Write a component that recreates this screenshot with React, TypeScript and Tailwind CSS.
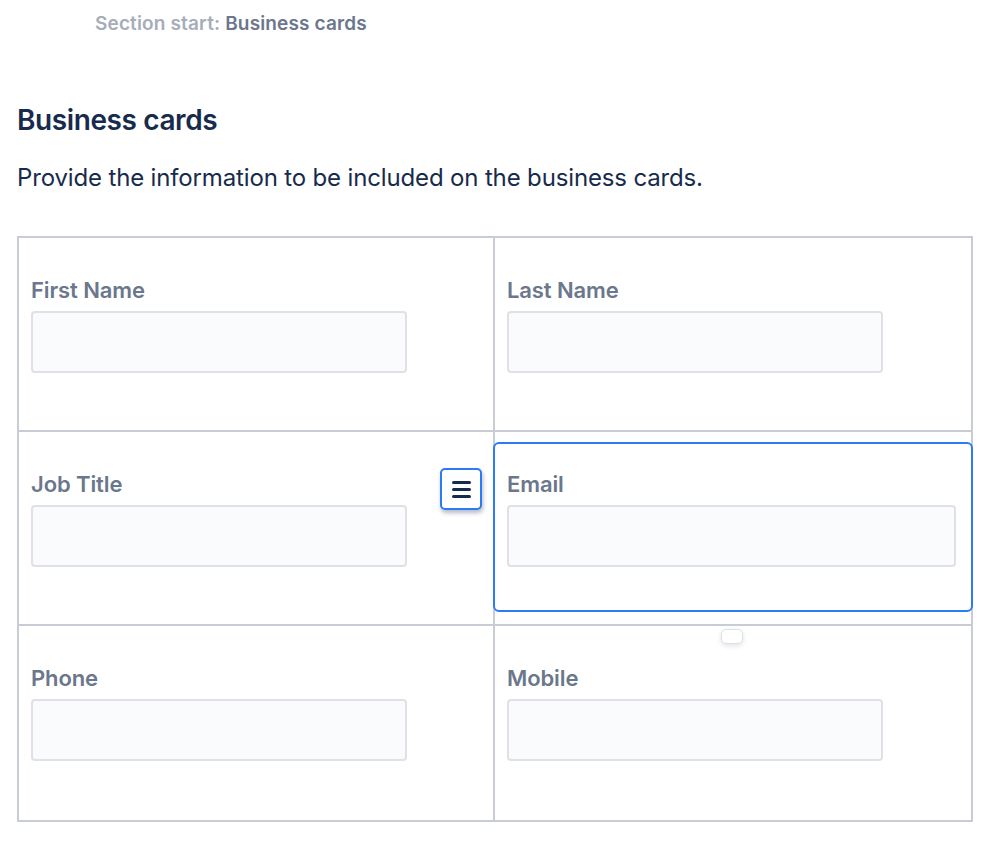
import { Fragment } from 'react';

const font = { fontFamily: 'Inter, "Noto Sans", sans-serif' };

interface Field {
  label: string;
  selected?: boolean;
}

const fields: Field[] = [
  { label: 'First Name' },
  { label: 'Last Name' },
  { label: 'Job Title' },
  { label: 'Email', selected: true },
  { label: 'Phone' },
  { label: 'Mobile' },
];

function Cell({ field, index }: { field: Field; index: number }) {
  const right = index % 2 === 1;
  const lastRow = index >= 4;
  return (
    <div
      className={`relative h-[194px] pl-[12px] pt-[37px] ${right ? '' : 'border-r-2 border-[#c8cdd5]'} ${lastRow ? '' : 'border-b-2 border-[#c8cdd5]'}`}
    >
      <div className="text-[22px] font-semibold leading-[30px] text-[#6b778c] tracking-[-0.1px]">{field.label}</div>
      <div
        className={`mt-[6px] h-[62px] rounded-[4px] border-2 border-[#dfe1e6] bg-[#fafbfc] ${field.selected ? 'w-[449px]' : 'w-[376px]'}`}
      />
      {field.selected && (
        <>
          <div className="pointer-events-none absolute left-[-2px] right-[-2px] top-[10px] h-[170px] rounded-[6px] border-2 border-[#2b7bf5]" />
          <button className="absolute left-[-55px] top-[36px] flex h-[42px] w-[42px] items-center justify-center rounded-[5px] border-2 border-[#2b7bf5] bg-white shadow-[1px_3px_4px_rgba(9,30,66,0.3)]">
            <span className="flex flex-col gap-[4px]">
              <span className="block h-[3px] w-[19px] rounded-full bg-[#172b4d]" />
              <span className="block h-[3px] w-[19px] rounded-full bg-[#172b4d]" />
              <span className="block h-[3px] w-[19px] rounded-full bg-[#172b4d]" />
            </span>
          </button>
          <div className="absolute left-[226px] top-[197px] z-10 h-[15px] w-[22px] rounded-[5px] border border-[#dfe1e6] bg-white shadow-[0_2px_5px_rgba(9,30,66,0.12)]" />
        </>
      )}
    </div>
  );
}

export default function App() {
  return (
    <div className="min-h-[849px] bg-white" style={font}>
      <div className="pl-[95px] pt-[12px] text-[19px] font-semibold leading-[24px] tracking-[0.15px]">
        <span className="text-[#a5adba]">Section start: </span>
        <span className="text-[#6b778c]">Business cards</span>
      </div>
      <h1 className="mt-[66px] pl-[17px] text-[28px] font-semibold leading-[36px] tracking-[-0.4px] text-[#172b4d]">
        Business cards
      </h1>
      <p className="mt-[24px] pl-[17px] text-[24px] leading-[32px] tracking-[-0.15px] text-[#172b4d]">
        Provide the information to be included on the business cards.
      </p>
      <div className="ml-[17px] mt-[42px] grid w-[956px] grid-cols-2 border-2 border-[#c8cdd5]">
        {fields.map((f, i) => (
          <Fragment key={f.label}>
            <Cell field={f} index={i} />
          </Fragment>
        ))}
      </div>
    </div>
  );
}
